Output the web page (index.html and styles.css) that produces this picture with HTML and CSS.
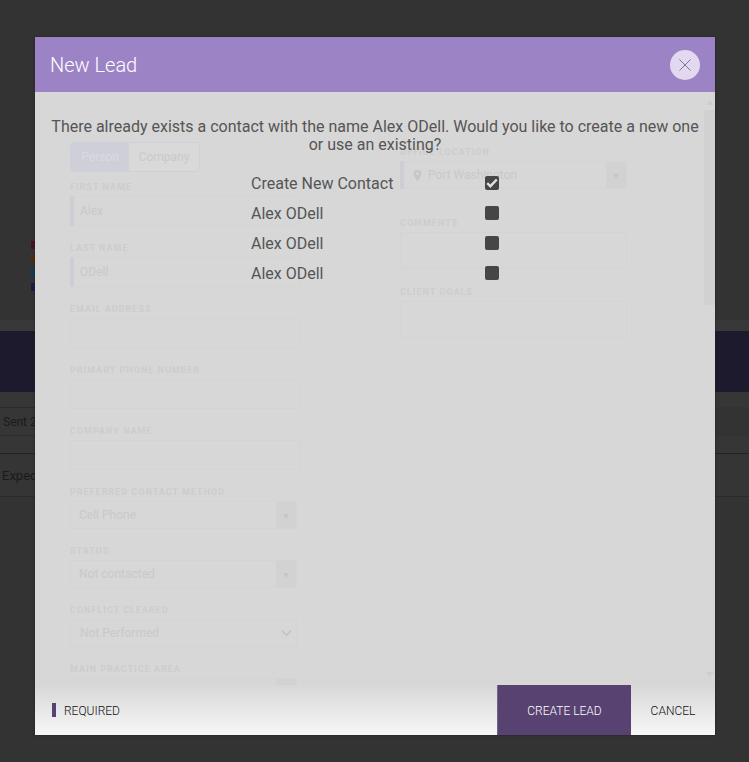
FILE: index.html
```html
<!DOCTYPE html>
<html lang="en">
<head>
  <meta charset="UTF-8">
  <meta name="viewport" content="width=device-width, initial-scale=1.0">
  <title>New Lead</title>
  <link rel="stylesheet" href="styles.css">
</head>
<body>
  <!-- page behind the backdrop -->
  <div class="page">
    <div class="legend">
      <span class="swatch swatch-red"></span>
      <span class="swatch swatch-orange"></span>
      <span class="swatch swatch-blue"></span>
      <span class="swatch swatch-navy"></span>
    </div>
    <div class="band"></div>
    <div class="banner"></div>
    <div class="gap-row"></div>
    <div class="row row-sent">Sent 2</div>
    <div class="row row-spacer"></div>
    <div class="row row-expected">Expected</div>
  </div>

  <div class="modal">
    <div class="modal-header">
      <h2>New Lead</h2>
      <button class="close-btn" type="button" aria-label="Close">
        <svg width="12" height="12" viewBox="0 0 12 12"><path d="M.5.5l11 11M11.500.5l-11 11" stroke="#7d7599" stroke-width="1" fill="none"/></svg>
      </button>
    </div>

    <div class="modal-body">
      <div class="lead-form">
        <div class="form-left">
          <div class="toggle">
            <span class="toggle-on">Person</span>
            <span class="toggle-off">Company</span>
          </div>
          <label class="first">First name</label>
          <div class="input req">Alex</div>
          <label>Last name</label>
          <div class="input req">ODell</div>
          <label>Email address</label>
          <div class="input"></div>
          <label>Primary phone number</label>
          <div class="input"></div>
          <label>Company name</label>
          <div class="input"></div>
          <label>Preferred contact method</label>
          <div class="select">Cell Phone<span class="select-arrow"></span></div>
          <label>Status</label>
          <div class="select">Not contacted<span class="select-arrow"></span></div>
          <label>Conflict cleared</label>
          <div class="select plain">Not Performed
            <svg width="11" height="8" viewBox="0 0 12 8"><path d="M1 1.500l5 5 5-5" stroke="#c4c4c4" stroke-width="2" fill="none"/></svg>
          </div>
          <label>Main practice area</label>
          <div class="select"><span class="select-arrow"></span></div>
        </div>
        <div class="form-right">
          <label>Office location</label>
          <div class="select req wide">
            <svg width="9" height="13" viewBox="0 0 10 13"><path fill-rule="evenodd" d="M5 0a4.500 4.500 0 0 1 4.500 4.500C9.500 7.500 5 13 5 13S.5 7.500.5 4.500A4.500 4.500 0 0 1 5 0zm0 3a1.500 1.500 0 1 0 0 3 1.500 1.500 0 0 0 0-3z" fill="#c8c8c8"/></svg>
            Port Washington<span class="select-arrow"></span>
          </div>
          <label class="comments">Comments</label>
          <div class="textarea"></div>
          <label class="goals">Client goals</label>
          <div class="textarea"></div>
        </div>
      </div>
      <div class="scrollbar">
        <span class="scroll-up"></span>
        <span class="scroll-thumb"></span>
        <span class="scroll-down"></span>
      </div>

      <div class="prompt">
        <p>There already exists a contact with the name Alex ODell. Would you like to create a new one or use an existing?</p>
        <ul class="choices">
          <li><span>Create New Contact</span><span class="check checked"><svg width="12" height="10" viewBox="0 0 12 10"><path d="M1.200 5.200l3.200 3 6.400-6.700" stroke="#e2e2e2" stroke-width="2.400" fill="none"/></svg></span></li>
          <li><span>Alex ODell</span><span class="check"></span></li>
          <li><span>Alex ODell</span><span class="check"></span></li>
          <li><span>Alex ODell</span><span class="check"></span></li>
        </ul>
      </div>
    </div>

    <div class="modal-footer">
      <div class="required"><span class="req-mark"></span><span class="req-text">REQUIRED</span></div>
      <button class="btn-create" type="button">CREATE LEAD</button>
      <button class="btn-cancel" type="button">CANCEL</button>
    </div>
  </div>
</body>
</html>
```

FILE: styles.css
```css
* {
  box-sizing: border-box;
}
html, body {
  margin: 0;
  height: 100%;
}
body {
  font-family: Roboto, "Liberation Sans", sans-serif;
  background: #333333;
  overflow: hidden;
}

/* background page */
.page {
  height: 762px;
  color: #1a1a1a;
  font-size: 12px;
}
.legend {
  display: flex;
  flex-direction: column;
  gap: 6px;
  padding: 241px 0 0 31px;
  height: 320px;
}
.swatch {
  width: 5px;
  height: 8px;
}
.swatch-red { background: #4d0f28; }
.swatch-orange { background: #4f2d0e; }
.swatch-blue { background: #0f3f52; }
.swatch-navy { background: #1e1a4a; }
.band {
  height: 11px;
  background: #383838;
}
.banner {
  height: 61px;
  background: #1e1a2e;
}
.gap-row {
  height: 15px;
  background: #363636;
}
.row {
  padding-left: 3px;
  background: #363636;
}
.row-sent {
  width: 300px;
  height: 29px;
  line-height: 28px;
  border-top: 1px solid #2b2b2b;
  border-bottom: 1px solid #2b2b2b;
}
.row-spacer {
  width: 100%;
  height: 18px;
  border-bottom: 1px solid #232323;
}
.row-expected {
  height: 43px;
  line-height: 44px;
  padding-left: 2px;
  font-size: 13px;
  background: #353535;
  border-bottom: 1px solid #2b2b2b;
}

/* modal */
.modal {
  position: absolute;
  left: 35px;
  top: 37px;
  width: 680px;
  height: 698px;
  display: flex;
  flex-direction: column;
  background: #d7d7d7;
  box-shadow: 0 0 2px #1f1f1f;
}
.modal-header {
  height: 55px;
  flex: none;
  display: flex;
  align-items: center;
  justify-content: space-between;
  padding: 0 15px;
  background: #9c83c6;
}
.modal-header h2 {
  margin: 0;
  color: #fff;
  font-size: 20px;
  font-weight: 300;
}
.close-btn {
  width: 30px;
  height: 30px;
  padding: 0;
  display: flex;
  align-items: center;
  justify-content: center;
  border: 0;
  border-radius: 50%;
  background: #e2d9f0;
}
.modal-body {
  position: relative;
  flex: 1;
  overflow: hidden;
}

/* faded form under the prompt */
.lead-form {
  display: flex;
  align-items: flex-start;
  padding: 50px 0 0 35px;
  color: #c9c9c9;
  font-size: 12px;
}
.lead-form label {
  display: block;
  height: 12px;
  margin: 15px 0 4px;
  font-size: 9px;
  line-height: 14px;
  font-weight: 700;
  letter-spacing: 1px;
  text-transform: uppercase;
  color: #cdcdcd;
}
.lead-form label.first {
  margin-top: 8px;
}
.form-left {
  width: 230px;
  flex: none;
}
.form-right {
  flex: none;
  width: 289px;
  height: 240px;
  margin-left: 78px;
  margin-top: -17px;
  padding: 5px 0 0 21px;
  border-right: 1px solid #d5d5d5;
  border-bottom: 1px solid #d5d5d5;
  border-left: 1px solid #d5d5d5;
}
.form-right label.comments {
  margin-top: 27px;
}
.form-right label.goals {
  margin-top: 16px;
}
.toggle {
  display: flex;
  width: 130px;
  height: 30px;
  border: 1px solid #d0d0da;
  border-radius: 4px;
  overflow: hidden;
}
.toggle span {
  line-height: 28px;
  text-align: center;
}
.toggle-on {
  width: 58px;
  background: #cfcfd9;
  color: #dadae0;
}
.toggle-off {
  flex: 1;
  background: #d9d9d9;
}
.input {
  height: 30px;
  line-height: 28px;
  padding-left: 10px;
  border: 1px solid #d4d4d4;
}
.input.req {
  border-left: 4px solid #cdcdd3;
  padding-left: 6px;
}
.select {
  position: relative;
  display: flex;
  align-items: center;
  width: 227px;
  height: 28px;
  padding-left: 8px;
  border: 1px solid #d4d4d4;
}
.select.plain {
  justify-content: space-between;
  padding-right: 4px;
  padding-left: 9px;
}
.select.wide {
  gap: 6px;
  padding-left: 9px;
  border-left: 4px solid #cdcdd3;
}
.select-arrow {
  position: absolute;
  right: 0;
  top: 0;
  width: 20px;
  height: 100%;
  background: #d2d2d2;
}
.select-arrow::after {
  content: "";
  position: absolute;
  left: 7px;
  top: 12px;
  border: 3px solid transparent;
  border-top: 5px solid #c6c6c6;
}
.textarea {
  height: 37px;
  width: 227px;
  border: 1px solid #d4d4d4;
}
.scrollbar {
  position: absolute;
  right: 0;
  top: 0;
  bottom: 50px;
  width: 11px;
}
.scroll-thumb {
  position: absolute;
  left: 0;
  right: 0;
  top: 18px;
  height: 195px;
  background: #d1d1d1;
}
.scroll-up, .scroll-down {
  position: absolute;
  left: 2px;
  border: 4px solid transparent;
}
.scroll-up {
  top: 4px;
  border-bottom: 5px solid #cecece;
}
.scroll-down {
  bottom: 4px;
  border-top: 5px solid #cecece;
}

/* prompt over the form */
.prompt {
  position: absolute;
  left: 15px;
  top: 26px;
  right: 15px;
  color: #555555;
  font-size: 16px;
  text-align: center;
}
.prompt p {
  margin: 0;
  line-height: 18px;
}
.choices {
  list-style: none;
  margin: 14px 0 0;
  padding: 0;
}
.choices li {
  display: flex;
  align-items: center;
  height: 30px;
  padding-left: 201px;
}
.choices li span:first-child {
  width: 234px;
  text-align: left;
}
.check {
  width: 14px;
  height: 14px;
  display: flex;
  align-items: center;
  justify-content: center;
  border-radius: 2px;
  background: #464646;
}

/* footer */
.modal-footer {
  position: absolute;
  left: 0;
  right: 0;
  bottom: 0;
  height: 50px;
  display: flex;
  align-items: stretch;
  background: linear-gradient(#d7d7d7, #f7f7f7);
  font-size: 12px;
  font-weight: 300;
}
.required {
  flex: 1;
  display: flex;
  align-items: center;
  gap: 8px;
  padding-left: 17px;
  color: #111;
}
.req-text {
  padding-top: 2px;
}
.req-mark {
  width: 4px;
  height: 14px;
  background: #574272;
}
.modal-footer button {
  border: 0;
  padding: 2px 0 0;
  font: inherit;
}
.btn-create {
  width: 134px;
  background: #574272;
  color: #fff;
  border-left: 1px solid #75648c !important;
}
.btn-cancel {
  width: 84px;
  background: none;
  color: #111;
}
```
